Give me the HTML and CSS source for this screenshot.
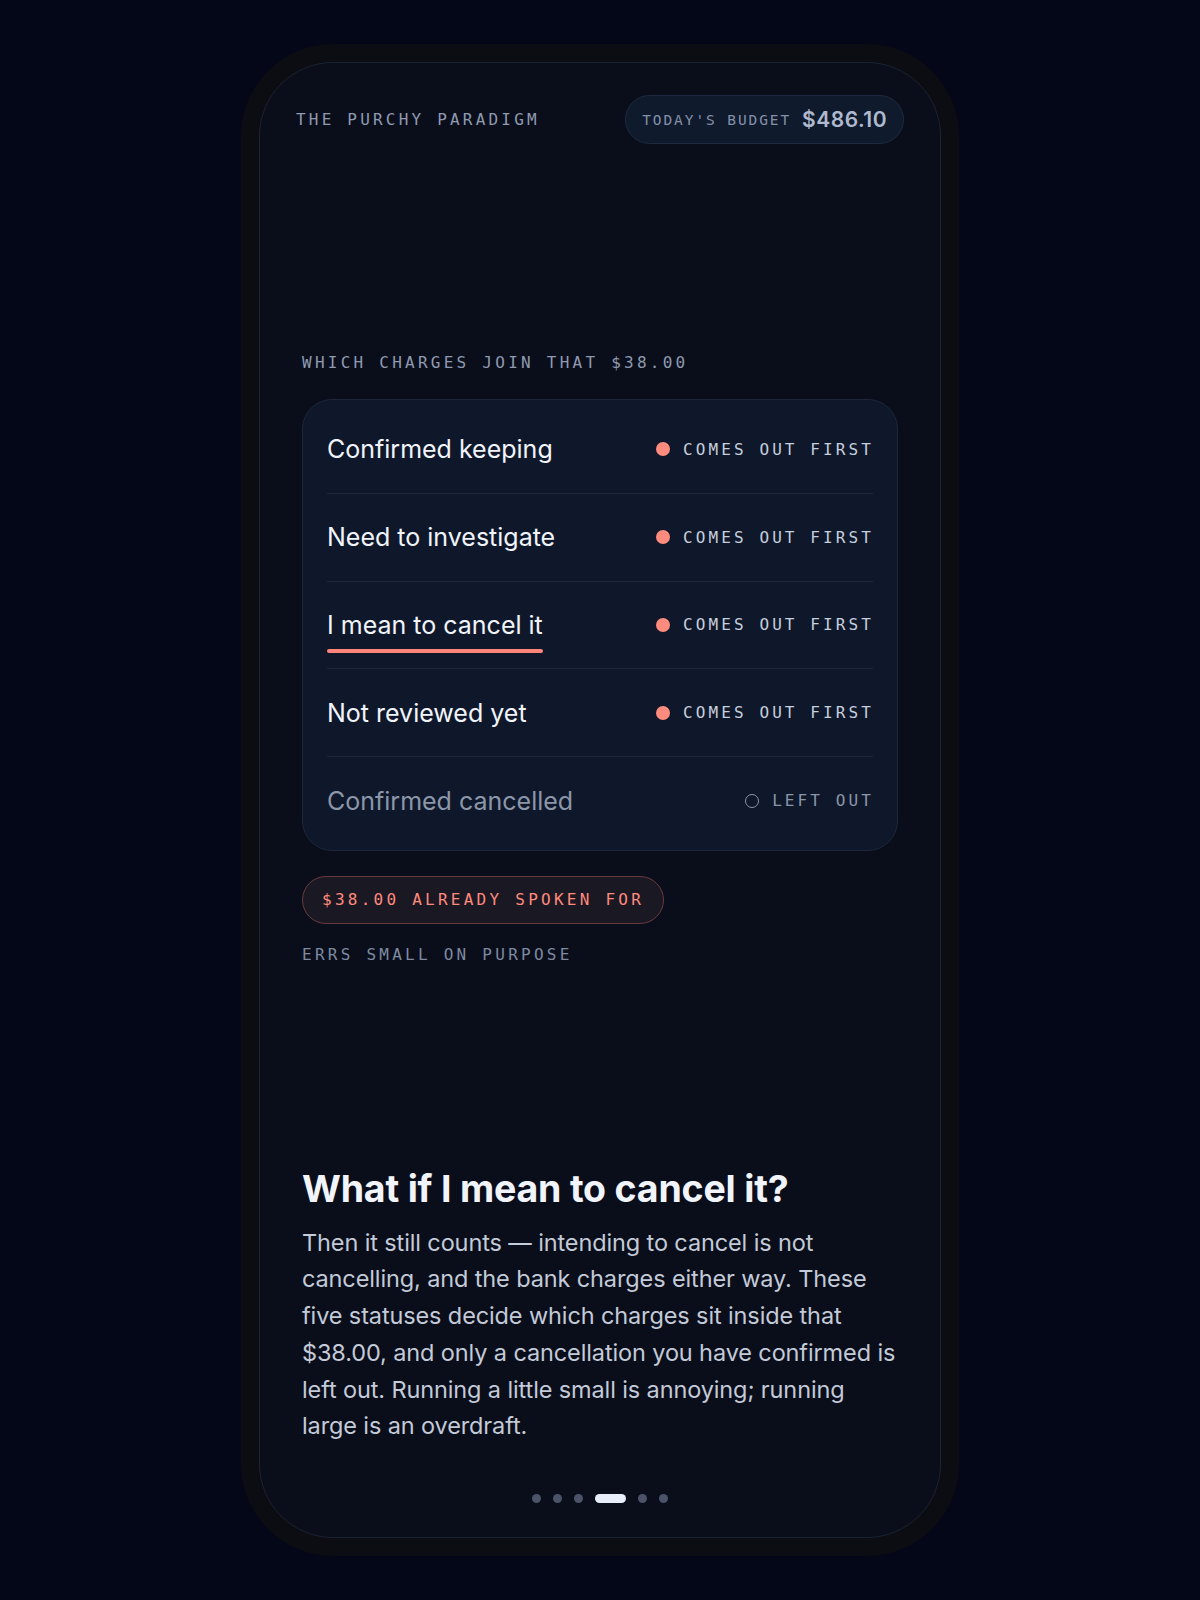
FILE: index.html
```html
<!DOCTYPE html>
<html lang="en">
<head>
    <meta charset="UTF-8">
    <meta name="viewport" content="width=device-width, initial-scale=1.0">
    <title>The Purchy Paradigm</title>
    <link rel="stylesheet" href="styles.css">
</head>
<body>
    <div class="phone">
        <div class="screen">
            <div class="topbar">
                <span class="brand">THE PURCHY PARADIGM</span>
                <div class="budget">
                    <span class="budget-label">TODAY'S BUDGET</span>
                    <span class="budget-value">$486.10</span>
                </div>
            </div>

            <div class="stage">
                <div class="visual">
                    <div class="label">WHICH CHARGES JOIN THAT $38.00</div>
                    <div class="card">
                        <div class="row">
                            <span class="status">Confirmed keeping</span>
                            <span class="tag"><span class="dot"></span>COMES OUT FIRST</span>
                        </div>
                        <div class="row">
                            <span class="status">Need to investigate</span>
                            <span class="tag"><span class="dot"></span>COMES OUT FIRST</span>
                        </div>
                        <div class="row">
                            <span class="status current">I mean to cancel it</span>
                            <span class="tag"><span class="dot"></span>COMES OUT FIRST</span>
                        </div>
                        <div class="row">
                            <span class="status">Not reviewed yet</span>
                            <span class="tag"><span class="dot"></span>COMES OUT FIRST</span>
                        </div>
                        <div class="row out">
                            <span class="status">Confirmed cancelled</span>
                            <span class="tag"><span class="dot hollow"></span>LEFT OUT</span>
                        </div>
                    </div>
                    <div class="spoken">$38.00 ALREADY SPOKEN FOR</div>
                    <div class="label note">ERRS SMALL ON PURPOSE</div>
                </div>
            </div>

            <div class="copy">
                <h2>What if I mean to cancel it?</h2>
                <p>Then it still counts — intending to cancel is not cancelling, and the bank charges either way. These five statuses decide which charges sit inside that $38.00, and only a cancellation you have confirmed is left out. Running a little small is annoying; running large is an overdraft.</p>
            </div>

            <div class="pager">
                <span class="pip"></span>
                <span class="pip"></span>
                <span class="pip"></span>
                <span class="pip active"></span>
                <span class="pip"></span>
                <span class="pip"></span>
            </div>
        </div>
    </div>
</body>
</html>
```

FILE: styles.css
```css
* {
    box-sizing: border-box;
}

body {
    margin: 0;
    background-color: #040718;
    font-family: "Inter", "Noto Sans", sans-serif;
    color: #eef2f8;
}

.phone {
    width: 718px;
    height: 1512px;
    margin: 44px auto 0;
    padding: 18px;
    border-radius: 92px;
    background-color: #0c0d12;
}

.screen {
    display: flex;
    flex-direction: column;
    height: 100%;
    padding: 32px 36px 34px;
    border-radius: 74px;
    border: 1px solid #1c2233;
    background-color: #0a0e1b;
}

.topbar {
    display: flex;
    justify-content: space-between;
    align-items: center;
}

.brand {
    font-family: "DejaVu Sans Mono", monospace;
    font-size: 16px;
    letter-spacing: 3.2px;
    color: #8f9ab0;
}

.budget {
    display: flex;
    align-items: center;
    gap: 11px;
    height: 49px;
    padding: 0 16px;
    border-radius: 25px;
    border: 1px solid #1e2a40;
    background-color: #101a2d;
}

.budget-label {
    font-family: "DejaVu Sans Mono", monospace;
    font-size: 14.5px;
    letter-spacing: 1.9px;
    color: #8390a8;
}

.budget-value {
    font-size: 21px;
    font-weight: 600;
    letter-spacing: 0.5px;
    color: #aeb9cd;
}

.stage {
    flex: 1;
    display: flex;
    flex-direction: column;
    justify-content: center;
    padding-top: 5px;
}

.visual {
    width: 596px;
    margin: 0 auto;
}

.label {
    font-family: "DejaVu Sans Mono", monospace;
    font-size: 16px;
    letter-spacing: 3.25px;
    color: #8f9ab0;
}

.card {
    margin-top: 27px;
    padding: 6px 24px 5px;
    border-radius: 30px;
    border: 1px solid #1e2739;
    background-color: #0f182b;
}

.row {
    display: flex;
    justify-content: space-between;
    align-items: center;
    height: 87.75px;
    border-bottom: 1px solid #1f2839;
}

.row:last-child {
    border-bottom: none;
}

.status {
    position: relative;
    font-size: 25px;
    color: #f1f4fa;
}

.status.current::after {
    content: "";
    position: absolute;
    left: 0;
    right: 0;
    bottom: -13px;
    height: 4px;
    border-radius: 2px;
    background-color: #ff857a;
}

.out .status {
    color: #8c96a9;
}

.tag {
    display: flex;
    align-items: center;
    gap: 13px;
    font-family: "DejaVu Sans Mono", monospace;
    font-size: 16px;
    letter-spacing: 3.1px;
    color: #c6cfdd;
    margin-right: -1px;
}

.out .tag {
    color: #8c96a9;
}

.dot {
    width: 14px;
    height: 14px;
    border-radius: 50%;
    background-color: #ff8a7e;
}

.dot.hollow {
    background-color: transparent;
    border: 1.5px solid #8c96a9;
}

.spoken {
    display: inline-block;
    margin-top: 25px;
    padding: 14px 19px;
    line-height: 18px;
    border-radius: 25px;
    border: 1px solid #6b3a3e;
    background-color: #1a1822;
    font-family: "DejaVu Sans Mono", monospace;
    font-size: 16px;
    letter-spacing: 3.25px;
    color: #ff8a7e;
}

.note {
    margin-top: 21px;
    color: #7e8aa1;
}

.copy {
    width: 596px;
    margin: 0 auto;
}

.copy h2 {
    margin: 0 0 15px;
    font-size: 37.5px;
    font-weight: 700;
    line-height: 42px;
    letter-spacing: -0.2px;
    color: #f1f5fb;
}

.copy p {
    margin: 0;
    font-size: 23.5px;
    line-height: 36.7px;
    letter-spacing: -0.12px;
    color: #c3cad8;
}

.pager {
    display: flex;
    justify-content: center;
    align-items: center;
    gap: 12px;
    margin-top: 49px;
    height: 9px;
}

.pip {
    width: 9px;
    height: 9px;
    border-radius: 50%;
    background-color: #4a5368;
}

.pip.active {
    width: 31px;
    border-radius: 5px;
    background-color: #e8effb;
}
```
